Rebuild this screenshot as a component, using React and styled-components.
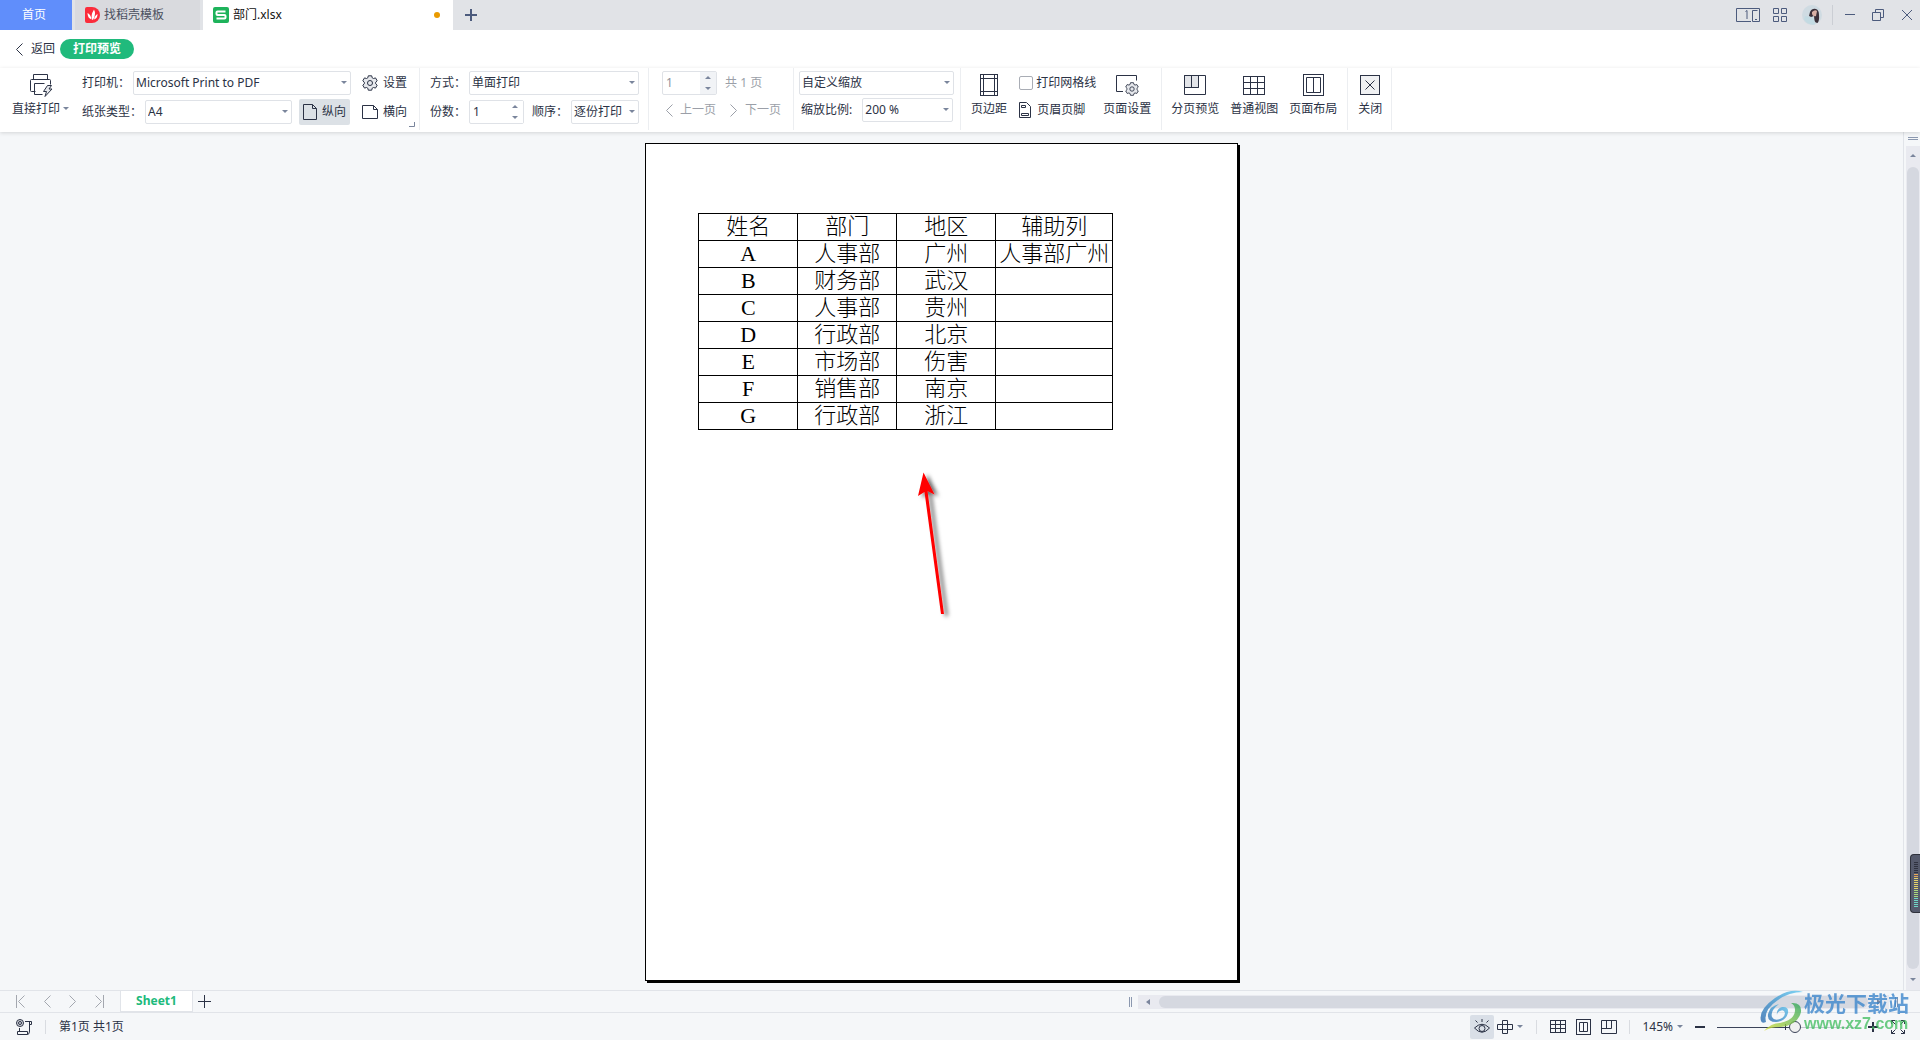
import React, { useState } from 'react';
import styled, { createGlobalStyle, css } from 'styled-components';

const INK = '#2b3245';
const TITLE_INK = '#4c5b7d';
const LINE = '#e1e4e9';
const SURFACE = '#f5f7f9';

const GlobalStyle = createGlobalStyle`
  *, *::before, *::after {
    box-sizing: border-box;
  }

  body {
    margin: 0;
    background: ${SURFACE};
    color: ${INK};
    font-family: 'Noto Sans', 'Noto Sans CJK SC', sans-serif;
    font-size: 12px;
    line-height: 16px;
  }

  button, input, select {
    font: inherit;
    color: inherit;
  }

  button {
    padding: 0;
    border: 0;
    background: none;
    white-space: nowrap;
    cursor: pointer;
  }

  svg {
    display: block;
    flex: none;
  }
`;

const Window = styled.div`
  display: flex;
  flex-direction: column;
  height: 100vh;
  overflow: hidden;
`;

/* title bar */

const TitleBar = styled.header`
  display: flex;
  flex: none;
  height: 30px;
  gap: 3px;
  background: #e1e3e7;
`;

const HomeTab = styled.button`
  width: 72px;
  padding-right: 4px;
  background: #608efb;
  color: #fff;
`;

const FileTab = styled.button`
  display: flex;
  align-items: center;
  gap: 4px;
  width: ${(props) => (props.$active ? '250px' : '125px')};
  padding: 0 13px 0 10px;
  background: ${(props) => (props.$active ? '#fff' : '#d9dade')};
  color: ${(props) => (props.$active ? '#111' : '#4b5060')};
`;

const UnsavedDot = styled.span`
  width: 6px;
  height: 6px;
  margin-left: auto;
  border-radius: 50%;
  background: #e99a00;
`;

const NewTab = styled.button`
  display: flex;
  align-items: center;
  padding: 0 9px;
  color: ${TITLE_INK};
`;

const WindowTools = styled.div`
  display: flex;
  align-items: center;
  margin-left: auto;
  color: ${TITLE_INK};
`;

const WindowButton = styled.button`
  display: flex;
  justify-content: center;
  width: ${(props) => props.$width}px;
`;

const TitleDivider = styled.span`
  width: 1px;
  height: 20px;
  margin-right: 5px;
  background: #cbced4;
`;

/* back row and ribbon */

const BackRow = styled.div`
  display: flex;
  flex: none;
  align-items: center;
  gap: 5px;
  height: 38px;
  padding: 0 14px;
  background: #fff;
`;

const BackButton = styled.button`
  display: flex;
  align-items: center;
  gap: 7px;
`;

const PreviewBadge = styled.span`
  padding: 2px 13px;
  border-radius: 10px;
  background: #20ba7c;
  color: #fff;
  font-weight: bold;
`;

const Ribbon = styled.div`
  display: flex;
  flex: none;
  height: 64px;
  padding-bottom: 2px;
  background: #fff;
  box-shadow: 0 1px 4px rgba(0, 0, 0, 0.14);
  z-index: 1;
`;

const Group = styled.div`
  display: flex;
  padding: 0 ${(props) => props.$right || 5}px 0 ${(props) => props.$left || 5}px;
  border-right: 1px solid #eceef1;
`;

const Rows = styled.div`
  display: flex;
  flex-direction: column;
  gap: ${(props) => props.$gap || 5}px;
  padding-top: 3px;
`;

const Row = styled.div`
  display: flex;
  align-items: center;
  height: 24px;
  gap: ${(props) => props.$gap || 3}px;
  padding-left: ${(props) => props.$indent || 0}px;
  white-space: nowrap;
`;

const PickerBox = styled.span`
  display: grid;
  align-items: center;
  width: ${(props) => props.$width}px;
  height: 24px;

  > * {
    grid-area: 1 / 1;
  }

  > svg {
    justify-self: end;
    margin-right: 4px;
    pointer-events: none;
  }
`;

const field = css`
  border: 1px solid #dfe2e7;
  border-radius: 2px;
  background: #fff;
`;

const Picker = styled.select`
  ${field}
  width: 100%;
  height: 100%;
  padding: 0 14px 0 2px;
  appearance: none;
`;

const SpinBox = styled.span`
  ${field}
  display: flex;
  width: 55px;
  height: 24px;
  color: ${(props) => (props.$muted ? '#8e929b' : INK)};
`;

const SpinInput = styled.input`
  flex: 1;
  min-width: 0;
  padding: 0 3px;
  border: 0;
  background: none;
`;

const SpinButtons = styled.span`
  display: flex;
  flex-direction: column;
  width: 16px;
  background: ${(props) => (props.$muted ? '#f1f3f6' : '#fff')};

  button {
    display: flex;
    flex: 1;
    align-items: center;
    justify-content: center;
  }
`;

const ToolButton = styled.button`
  display: flex;
  align-items: center;
  height: 26px;
  gap: ${(props) => props.$gap || 5}px;
  padding: 0 ${(props) => (props.$active ? 4 : 0)}px;
  border-radius: 2px;
  background: ${(props) => (props.$active ? '#dce1e6' : 'none')};
  color: ${(props) => (props.disabled ? '#9b9fa8' : INK)};
`;

const BigButton = styled.button`
  display: flex;
  flex-direction: column;
  align-items: center;
  gap: 4px;
  margin-right: ${(props) => props.$after || 3}px;
  padding: 5px 4px 0;

  &:last-child {
    margin-right: 0;
  }

  > svg {
    height: 24px;
  }
`;

const CaretLabel = styled.span`
  display: flex;
  align-items: center;
  gap: 3px;
`;

const CheckLabel = styled.label`
  display: flex;
  align-items: center;
  gap: 3px;
`;

const CheckBox = styled.input`
  width: 14px;
  height: 14px;
  margin: 0;
  border: 1px solid #a9adb5;
  border-radius: 2px;
  background: #fff;
  appearance: none;
`;

const PageOptions = styled(Rows)`
  margin-right: 3px;
`;

const Launcher = styled.button`
  align-self: flex-end;
  padding: 0 0 3px 2px;
  color: #7a859c;
`;

/* preview area */

const Workspace = styled.main`
  display: flex;
  flex: 1;
  min-height: 0;
`;

const Canvas = styled.div`
  display: flex;
  flex: 1;
  justify-content: center;
  padding: 11px 20px 9px 0;
`;

const Paper = styled.section`
  position: relative;
  height: 100%;
  aspect-ratio: 210 / 297;
  padding: 69px 0 0 52px;
  border: 1px solid #000;
  background: #fff;
  box-shadow: 2px 2px 0 #000;
`;

const SheetTable = styled.table`
  border-collapse: collapse;
  table-layout: fixed;
  width: 415px;
  color: #000;
  font: 22px/26px 'Liberation Serif', 'Noto Sans CJK SC', serif;

  th, td {
    height: 27px;
    padding: 0;
    border: 1px solid #000;
    font-weight: 300;
    text-align: center;
    white-space: nowrap;
  }

  td:first-child {
    font-weight: 400;
  }
`;

const Pointer = styled.svg`
  position: absolute;
  top: 319px;
  left: 260px;
`;

const SideScroll = styled.div`
  display: flex;
  flex-direction: column;
  width: 17px;
  padding-left: 2px;
  border-left: 1px solid ${LINE};
`;

const SplitHandle = styled.div`
  display: flex;
  flex: none;
  align-items: center;
  justify-content: center;
  height: 14px;
`;

const ScrollTrack = styled.div`
  display: flex;
  flex: 1;
  flex-direction: ${(props) => (props.$vertical ? 'column' : 'row')};
  align-items: center;
  background: #e9eaf0;
`;

const ScrollArrow = styled.button`
  display: flex;
  align-items: center;
  justify-content: center;
  width: 20px;
  height: 20px;
`;

const ScrollThumb = styled.div`
  flex: 1;
  align-self: stretch;
  margin: 1px;
  border-radius: 6px;
  background: #d5d8e0;
`;

const LevelMeter = styled.div`
  position: absolute;
  top: 854px;
  right: 0;
  z-index: 2;
  width: 10px;
  height: 59px;
  padding: 7px 2px 6px 3px;
  border: 1px solid #2f323c;
  border-right: 0;
  border-radius: 4px 0 0 4px;
  background: #555a6c;
`;

/* sheet bar and status bar */

const SheetBar = styled.nav`
  display: flex;
  flex: none;
  height: 23px;
  border: 1px solid ${LINE};
  border-width: 1px 0;
`;

const SheetNav = styled.div`
  display: flex;
  align-items: center;
  width: 120px;
  padding-left: 16px;
  gap: 16px;
  color: #a3a7af;
`;

const SheetTab = styled.button`
  width: 73px;
  border: 1px solid ${LINE};
  border-top: 0;
  background: #fff;
  color: #20ba7c;
  font-weight: bold;
`;

const AddSheet = styled.button`
  display: flex;
  align-items: center;
  padding: 0 5px;
`;

const BottomScroll = styled.div`
  display: flex;
  align-items: center;
  width: 791px;
  max-width: 50%;
  margin-left: auto;
  padding-right: 22px;
  gap: 6px;

  ${ScrollTrack} {
    height: 14px;
  }
`;

const StatusBar = styled.footer`
  display: flex;
  flex: none;
  align-items: center;
  height: 27px;
  padding: 0 14px 0 16px;
`;

const StatusTools = styled.div`
  display: flex;
  align-items: center;
  gap: ${(props) => props.$gap || 10}px;
`;

const StatusRight = styled(StatusTools)`
  margin-left: auto;
`;

const StatusButton = styled.button`
  display: flex;
  align-items: center;
  justify-content: center;
  gap: 4px;
  height: 24px;
  padding: 0 ${(props) => (props.$active ? 4 : 0)}px;
  border-radius: 2px;
  background: ${(props) => (props.$active ? '#d9dfe7' : 'none')};
`;

const Divider = styled.span`
  width: 1px;
  height: 14px;
  margin: 0 ${(props) => props.$space}px;
  background: #d9dce1;
`;

const ZoomRange = styled.input`
  width: 139px;
  height: 14px;
  margin: 0;
  appearance: none;
  background:
    linear-gradient(${INK}, ${INK}) 68px 4px / 1px 6px no-repeat,
    linear-gradient(90deg, #3b4359 78px, #c3c8d0 78px) 0 7px / 100% 1px no-repeat;

  &::-webkit-slider-thumb {
    width: 12px;
    height: 12px;
    border: 1px solid #3b4359;
    border-radius: 50%;
    background: #f0f0f0;
    appearance: none;
  }
`;

const Watermark = styled.div`
  position: absolute;
  right: 11px;
  bottom: 6px;
  display: flex;
  z-index: 3;
  opacity: 0.78;
  pointer-events: none;
`;

const WatermarkText = styled.div`
  color: #3a85cc;
  font: bold 21px/24px 'Noto Sans CJK SC', sans-serif;
`;

const WatermarkUrl = styled.div`
  color: #45bf62;
  font: bold 16px/20px 'Liberation Sans', sans-serif;
`;

const Icon = ({ w = 16, h = 16, children, ...rest }) => (
  <svg width={w} height={h} viewBox={`0 0 ${w} ${h}`} fill="none" stroke="currentColor" aria-hidden="true" {...rest}>
    {children}
  </svg>
);

const carets = {
  down: 'M0 1h6L3 4z',
  up: 'M0 4h6L3 1z',
  left: 'M5 0v6L1 3z',
  right: 'M1 0v6l4-3z',
};

const Caret = ({ dir = 'down' }) => (
  <Icon w={6} h={6} fill="#7a859c" stroke="none">
    <path d={carets[dir]} />
  </Icon>
);

const Chevron = ({ dir = 'left', bar }) => (
  <Icon w={10} h={13}>
    <path d={dir === 'left' ? 'M8.5.5l-6 6 6 6' : 'M1.5.5l6 6-6 6'} />
    {bar && <path d={dir === 'left' ? 'M.5 0v13' : 'M9.5 0v13'} />}
  </Icon>
);

const Plus = ({ size = 12, weight = 1 }) => (
  <Icon w={size} h={size} strokeWidth={weight}>
    <path d={`M0 ${size / 2}h${size}M${size / 2} 0v${size}`} />
  </Icon>
);

const Gear = ({ size = 16, fill = '#e6e8ec' }) => (
  <svg width={size} height={size} viewBox="0 0 16 16" fill={fill} stroke="currentColor" aria-hidden="true">
    <path
      d="M6.300.8h3.400l.5 2 1.300.7 2-.6 1.700 2.900-1.500 1.400v1.600l1.500 1.400-1.700 2.900-2-.6-1.300.7-.5 2H6.300l-.5-2-1.300-.7-2 .6L.8 10.200l1.500-1.400V7.200L.8 5.800l1.700-2.900 2 .6 1.300-.7z"
      strokeLinejoin="round"
    />
    <circle cx="8" cy="8" r="2.500" />
  </svg>
);

const GridIcon = ({ w = 22, h = 20 }) => {
  const x = (w - 1) / 3;
  const y = (h - 1) / 3;
  return (
    <Icon w={w} h={h} shapeRendering="crispEdges">
      <rect x=".5" y=".5" width={w - 1} height={h - 1} />
      <path d={`M0 ${y + 0.5}h${w}M0 ${2 * y + 0.5}h${w}M${x + 0.5} 0v${h}M${2 * x + 0.5} 0v${h}`} />
    </Icon>
  );
};

const PrinterIcon = () => (
  <Icon w={24} h={24}>
    <path d="M4.500 6.500V1.500h14v5M6.500 18.500h-4q-1 0-1-1v-10q0-1 1-1h18q1 0 1 1v4" />
    <path d="M15.500 10.500h-10v11h8" />
    <path d="M18.500 12.500l-4 6h3l-1.500 5 7-7.500h-3l2.500-3.500z" fill="#e6e8ec" strokeLinejoin="round" />
  </Icon>
);

const MarginIcon = () => (
  <Icon w={18} h={24}>
    <rect x=".5" y="1.500" width="17" height="21" />
    <path d="M3.500 1v22M14.500 1v22M0 5.500h18M0 18.500h18" />
  </Icon>
);

const PageSetupIcon = () => (
  <Icon w={24} h={24}>
    <path d="M8 18.500H1.500V2.500h20v5" />
    <g transform="translate(10 9)">
      <Gear size={14} />
    </g>
  </Icon>
);

const BreakPreviewIcon = () => (
  <Icon w={22} h={24}>
    <path d="M.5 2.500h14v12H.5z" fill="#e3e5e9" />
    <path d="M.5 2.500h21v19H.5zM7.500 2v12M14.500 2v12.500H.5" />
  </Icon>
);

const LayoutIcon = ({ w = 21, h = 24 }) => (
  <Icon w={w} h={h}>
    <rect x=".5" y=".5" width={w - 1} height={h - 1} />
    <path d={`M3.500 3.500h${w - 7}v${h - 7}h-${w - 7}zM${Math.floor(w / 2) + 0.5} 3.500v${h - 7}`} />
  </Icon>
);

const CloseBoxIcon = () => (
  <Icon w={20} h={24}>
    <rect x=".5" y="2.500" width="19" height="19" fill="#f0f1f3" />
    <path d="M5.500 7.500l9 9M14.500 7.500l-9 9" />
  </Icon>
);

const HeaderFooterIcon = () => (
  <Icon w={12} h={16}>
    <path d="M.5.5h7l4 4v11H.5z" />
    <path d="M2.500 3.500h4v2h-4zM2.500 11.500h7v2h-7z" />
  </Icon>
);

const DocerIcon = () => (
  <Icon w={15} h={16} stroke="none">
    <path d="M0 2q0-2 2-2h5a8 8 0 0 1 0 16H2q-2 0-2-2z" fill="#fb2c3b" />
    <path
      d="M7.500 13Q5 9 9 2.500 11.500 7 8 13zM6.500 12.500Q2.500 11 2.500 6 6 7.500 6.500 12.500zM9 12.500Q9.500 8.500 12.500 7 12.500 11.500 9 12.500z"
      fill="#fff"
    />
  </Icon>
);

const SpreadsheetIcon = () => (
  <Icon w={16} h={16} stroke="none">
    <rect width="16" height="16" rx="2" fill="#1eb35b" />
    <path d="M12.500 4.500h-8q-1 0-1 1V7q0 1 1 1h7q1 0 1 1v1.500q0 1-1 1h-8" stroke="#fff" strokeWidth="2" />
  </Icon>
);

const AvatarIcon = () => (
  <Icon w={20} h={20} stroke="none">
    <circle cx="10" cy="10" r="10" fill="#cfdbe2" />
    <path d="M8 7q2-4 6-3 3 1 3 6 .5 6-1.500 8-2 0-3-2l-.5-5-3 1-2-1z" fill="#3a3039" />
    <path d="M10 7q3-3 5-1l-1 5q-3 1-4-2z" fill="#d8b0a5" />
    <path d="M3 11l6 1 3 2 1 5.500q-7 1-11-5z" fill="#c3dbe3" />
  </Icon>
);

const Select = ({ label, width, value, id }) => (
  <PickerBox $width={width}>
    <Picker id={id} aria-label={label} defaultValue={value}>
      <option>{value}</option>
    </Picker>
    <Caret />
  </PickerBox>
);

const Spinner = ({ id, label, muted }) => {
  const [value, setValue] = useState(1);
  return (
    <SpinBox $muted={muted}>
      <SpinInput
        id={id}
        aria-label={label}
        value={value}
        disabled={muted}
        onChange={(e) => setValue(Number(e.target.value) || 1)}
      />
      <SpinButtons $muted={muted}>
        <button type="button" aria-label="增加" disabled={muted} onClick={() => setValue(value + 1)}>
          <Caret dir="up" />
        </button>
        <button type="button" aria-label="减少" disabled={muted} onClick={() => setValue(Math.max(1, value - 1))}>
          <Caret />
        </button>
      </SpinButtons>
    </SpinBox>
  );
};

const Muted = styled.span`
  color: #9b9fa8;
`;

const header = ['姓名', '部门', '地区', '辅助列'];

const people = [
  ['A', '人事部', '广州', '人事部广州'],
  ['B', '财务部', '武汉', ''],
  ['C', '人事部', '贵州', ''],
  ['D', '行政部', '北京', ''],
  ['E', '市场部', '伤害', ''],
  ['F', '销售部', '南京', ''],
  ['G', '行政部', '浙江', ''],
];

const meterColor = (i) => {
  if (i < 6) return '#2f323f';
  if (i < 8) return '#e6a85a';
  if (i < 14) return '#e2d36a';
  if (i < 18) return '#a9d97c';
  return '#6fd6c4';
};

const Title = () => (
  <TitleBar>
    <HomeTab>首页</HomeTab>
    <FileTab>
      <DocerIcon />
      找稻壳模板
    </FileTab>
    <FileTab $active>
      <SpreadsheetIcon />
      部门.xlsx
      <UnsavedDot />
    </FileTab>
    <NewTab aria-label="新建">
      <Plus weight={2} />
    </NewTab>
    <WindowTools>
      <WindowButton $width={40} aria-label="窗口排列">
        <Icon w={24} h={14}>
          <path d="M15 13.500H.5V.5h23v13h-7V2.500h5M19 11.500h2M9.500 3.500l1.500-1V11" />
        </Icon>
      </WindowButton>
      <WindowButton $width={24} aria-label="应用">
        <Icon w={14} h={14}>
          <path d="M.5.5h5v5h-5zM8.500.5h5v5h-5zM.5 8.500h5v5h-5zM8.500 8.500h5v5h-5z" />
        </Icon>
      </WindowButton>
      <WindowButton $width={40} aria-label="账户">
        <AvatarIcon />
      </WindowButton>
      <TitleDivider />
      <WindowButton $width={24} aria-label="最小化">
        <Icon w={10} h={10}>
          <path d="M0 4.500h10" />
        </Icon>
      </WindowButton>
      <WindowButton $width={32} aria-label="还原">
        <Icon w={12} h={12}>
          <path d="M.5 3.500h8v8h-8zM3.500 3.500v-3h8v8h-3" />
        </Icon>
      </WindowButton>
      <WindowButton $width={26} aria-label="关闭窗口">
        <Icon w={10} h={10}>
          <path d="M0 0l10 10M10 0L0 10" />
        </Icon>
      </WindowButton>
    </WindowTools>
  </TitleBar>
);

const PrintRibbon = () => (
  <Ribbon>
    <Group $left={8} $right={4}>
      <BigButton $after={9}>
        <PrinterIcon />
        <CaretLabel>
          直接打印
          <Caret />
        </CaretLabel>
      </BigButton>
      <Rows>
        <Row>
          <label htmlFor="printer">打印机：</label>
          <Select id="printer" width={218} value="Microsoft Print to PDF" />
        </Row>
        <Row>
          <label htmlFor="paper">纸张类型：</label>
          <Select id="paper" width={147} value="A4" />
          <Row $indent={4}>
            <ToolButton $active>
              <Icon w={14} h={16}>
                <path d="M.5.5h9l4 4v11H.5zM9.500.5v4h4" />
              </Icon>
              纵向
            </ToolButton>
          </Row>
        </Row>
      </Rows>
      <Rows>
        <Row $indent={11}>
          <ToolButton>
            <Gear />
            设置
          </ToolButton>
        </Row>
        <Row $indent={11}>
          <ToolButton>
            <Icon w={16} h={14}>
              <path d="M.5.500h11l4 4v9H.5zM11.500.5v4h4" />
            </Icon>
            横向
          </ToolButton>
        </Row>
      </Rows>
      <Launcher aria-label="更多打印选项">
        <Icon w={6} h={5}>
          <path d="M5.500 0v4.500H0" />
        </Icon>
      </Launcher>
    </Group>

    <Group $left={10} $right={9}>
      <Rows>
        <Row>
          <label htmlFor="mode">方式：</label>
          <Select id="mode" width={170} value="单面打印" />
        </Row>
        <Row>
          <label htmlFor="copies">份数：</label>
          <Spinner id="copies" />
          <Row $indent={5}>
            <label htmlFor="order">顺序：</label>
            <Select id="order" width={68} value="逐份打印" />
          </Row>
        </Row>
      </Rows>
    </Group>

    <Group $left={13} $right={12}>
      <Rows $gap={3}>
        <Row $gap={8}>
          <Spinner label="页码" muted />
          <Muted>共 1 页</Muted>
        </Row>
        <Row $gap={13} $indent={2}>
          <ToolButton disabled $gap={6}>
            <Chevron />
            上一页
          </ToolButton>
          <ToolButton disabled $gap={6}>
            <Chevron dir="right" />
            下一页
          </ToolButton>
        </Row>
      </Rows>
    </Group>

    <Group $right={6}>
      <Rows $gap={3}>
        <Row>
          <Select label="缩放方式" width={155} value="自定义缩放" />
        </Row>
        <Row $gap={10} $indent={2}>
          <label htmlFor="scale">缩放比例:</label>
          <Select id="scale" width={91} value="200 %" />
        </Row>
      </Rows>
    </Group>

    <Group $left={6} $right={6}>
      <BigButton>
        <MarginIcon />
        页边距
      </BigButton>
      <PageOptions $gap={3}>
        <Row $indent={5}>
          <CheckLabel>
            <CheckBox type="checkbox" />
            打印网格线
          </CheckLabel>
        </Row>
        <Row $indent={5}>
          <ToolButton $gap={6}>
            <HeaderFooterIcon />
            页眉页脚
          </ToolButton>
        </Row>
      </PageOptions>
      <BigButton>
        <PageSetupIcon />
        页面设置
      </BigButton>
    </Group>

    <Group $right={6}>
      <BigButton>
        <BreakPreviewIcon />
        分页预览
      </BigButton>
      <BigButton>
        <GridIcon w={22} h={19} />
        普通视图
      </BigButton>
      <BigButton>
        <LayoutIcon h={22} />
        页面布局
      </BigButton>
    </Group>

    <Group $left={6}>
      <BigButton>
        <CloseBoxIcon />
        关闭
      </BigButton>
    </Group>
  </Ribbon>
);

const Preview = () => (
  <Workspace>
    <Canvas>
      <Paper>
        <SheetTable>
          <colgroup>
            <col width="99" />
            <col width="99" />
            <col width="99" />
            <col width="117" />
          </colgroup>
          <thead>
            <tr>
              {header.map((name) => (
                <th key={name}>{name}</th>
              ))}
            </tr>
          </thead>
          <tbody>
            {people.map((row) => (
              <tr key={row[0]}>
                {row.map((cell, i) => (
                  <td key={header[i]}>{cell}</td>
                ))}
              </tr>
            ))}
          </tbody>
        </SheetTable>
        <Pointer width="60" height="165" viewBox="0 0 60 165" aria-hidden="true">
          <defs>
            <filter id="pointer-shadow" x="-50%" y="-20%" width="220%" height="140%">
              <feDropShadow dx="4" dy="2" stdDeviation="2" floodOpacity="0.6" />
            </filter>
          </defs>
          <g filter="url(#pointer-shadow)" fill="#f00">
            <path d="M17.500 9.500L28.500 31.500 21.500 28 38 151h-3L18.500 29 12 33z" />
          </g>
        </Pointer>
      </Paper>
    </Canvas>
    <SideScroll>
      <SplitHandle>
        <Icon w={10} h={4} stroke="#8b98af">
          <path d="M0 .5h10M0 2.500h10" />
        </Icon>
      </SplitHandle>
      <ScrollTrack $vertical>
        <ScrollArrow aria-label="向上滚动">
          <Caret dir="up" />
        </ScrollArrow>
        <ScrollThumb />
        <ScrollArrow aria-label="向下滚动">
          <Caret />
        </ScrollArrow>
      </ScrollTrack>
    </SideScroll>
  </Workspace>
);

const Sheets = () => (
  <SheetBar>
    <SheetNav>
      <button aria-label="第一页">
        <Chevron bar />
      </button>
      <button aria-label="上一页">
        <Chevron />
      </button>
      <button aria-label="下一页">
        <Chevron dir="right" />
      </button>
      <button aria-label="最后一页">
        <Chevron dir="right" bar />
      </button>
    </SheetNav>
    <SheetTab>Sheet1</SheetTab>
    <AddSheet aria-label="新建工作表">
      <Icon w={13} h={13}>
        <path d="M0 6.500h13M6.500 0v13" />
      </Icon>
    </AddSheet>
    <BottomScroll>
      <Icon w={3} h={10} stroke="#8b98af">
        <path d="M.5 0v10M2.500 0v10" />
      </Icon>
      <ScrollTrack>
        <ScrollArrow aria-label="向左滚动">
          <Caret dir="left" />
        </ScrollArrow>
        <ScrollThumb />
        <ScrollArrow aria-label="向右滚动">
          <Caret dir="right" />
        </ScrollArrow>
      </ScrollTrack>
      <Icon w={3} h={10} stroke="#8b98af">
        <path d="M.5 0v10M2.500 0v10" />
      </Icon>
    </BottomScroll>
  </SheetBar>
);

const Status = () => {
  const [zoom, setZoom] = useState(57);
  return (
    <StatusBar>
      <StatusButton aria-label="宏">
        <Icon>
          <circle cx="4" cy="4" r="3.500" fill="#d5d8de" />
          <circle cx="4" cy="4" r="1.500" />
          <path d="M9 2.500h6.500v3h-2M13.500 3v9M3.500 9v3.500M1.500 12.500h10v3h-10zM11.500 15.500q2 0 2-3.500" />
        </Icon>
      </StatusButton>
      <Divider $space={13} />
      第1页 共1页
      <StatusRight $gap={3}>
        <StatusButton $active aria-label="护眼模式">
          <Icon>
            <path d="M.5 9Q8 1.500 15.500 9 8 17.500.5 9z" />
            <circle cx="8" cy="9.500" r="3" />
            <path d="M8 0v3M1.500 1.500l2 2M14.500 1.500l-2 2" />
          </Icon>
        </StatusButton>
        <StatusButton aria-label="阅读模式">
          <Icon>
            <path d="M5.500 1.500h5v13h-5zM.5 5.500h15v5H.5z" />
          </Icon>
          <Caret />
        </StatusButton>
        <Divider $space={10} />
        <StatusTools>
          <StatusButton aria-label="普通视图">
            <GridIcon w={16} h={13} />
          </StatusButton>
          <StatusButton aria-label="页面布局">
            <LayoutIcon w={15} h={16} />
          </StatusButton>
          <StatusButton aria-label="分页预览">
            <Icon w={16} h={14}>
              <path d="M.5.5h15v13H.5zM5.500.5v8M10.500.5v8M.5 8.500h10" />
            </Icon>
          </StatusButton>
        </StatusTools>
        <Divider $space={9} />
        <StatusTools $gap={12}>
          <StatusButton>
            145%
            <Caret />
          </StatusButton>
          <StatusButton aria-label="缩小">
            <Icon w={10} h={10} strokeWidth="2">
              <path d="M0 5h10" />
            </Icon>
          </StatusButton>
          <ZoomRange
            type="range"
            min="0"
            max="100"
            aria-label="缩放"
            value={zoom}
            onChange={(e) => setZoom(Number(e.target.value))}
          />
          <StatusButton aria-label="放大">
            <Plus size={10} weight={2} />
          </StatusButton>
          <StatusButton aria-label="全屏">
            <Icon w={16} h={14}>
              <path d="M1.500 4V.5H5M11 .5h3.500V4M14.500 10v3.500H11M5 13.500H1.500V10M1.500.5l4 4M14.500.5l-4 4M14.500 13.500l-4-4M1.500 13.500l4-4" />
            </Icon>
          </StatusButton>
        </StatusTools>
      </StatusRight>
    </StatusBar>
  );
};

const SiteMark = () => (
  <Watermark>
    <svg width="44" height="42" viewBox="0 0 44 42" aria-hidden="true">
      <defs>
        <linearGradient id="mark-blue" x1="1" y1="0" x2="0" y2="1">
          <stop offset="0" stopColor="#5cc8f2" />
          <stop offset="1" stopColor="#2667ad" />
        </linearGradient>
        <linearGradient id="mark-green" x1="1" y1="0" x2="0" y2="1">
          <stop offset="0" stopColor="#27a55c" />
          <stop offset="1" stopColor="#dbe03a" />
        </linearGradient>
      </defs>
      <path d="M43 2Q30-2 15 8-2 20 1 31q1 3 5 1-3-12 12-22Q29 2 43 2z" fill="url(#mark-blue)" />
      <path
        d="M19 14q-9 7-7 13 2 4 8 2 5-2 5-6-1-4-5-2-3 1-3 4-1-6 5-8 7-1 6 6-2 8-12 9-9 0-8-8 2-8 11-10z"
        fill="url(#mark-blue)"
      />
      <path d="M31 13q11-1 10 9-3 13-20 15-10 0-17 4 7-8 16-8 15-3 15-13 0-5-4-7z" fill="url(#mark-green)" />
    </svg>
    <div>
      <WatermarkText>极光下载站</WatermarkText>
      <WatermarkUrl>www.xz7.com</WatermarkUrl>
    </div>
  </Watermark>
);

const App = () => (
  <>
    <GlobalStyle />
    <Window>
      <Title />
      <BackRow>
        <BackButton>
          <Chevron />
          返回
        </BackButton>
        <PreviewBadge>打印预览</PreviewBadge>
      </BackRow>
      <PrintRibbon />
      <Preview />
      <Sheets />
      <Status />
      <LevelMeter>
        <Icon w={4} h={46} stroke="none">
          {Array.from({ length: 23 }, (_, i) => (
            <rect key={i} y={i * 2} width="4" height="1" fill={meterColor(i)} />
          ))}
        </Icon>
      </LevelMeter>
      <SiteMark />
    </Window>
  </>
);

export default App;
